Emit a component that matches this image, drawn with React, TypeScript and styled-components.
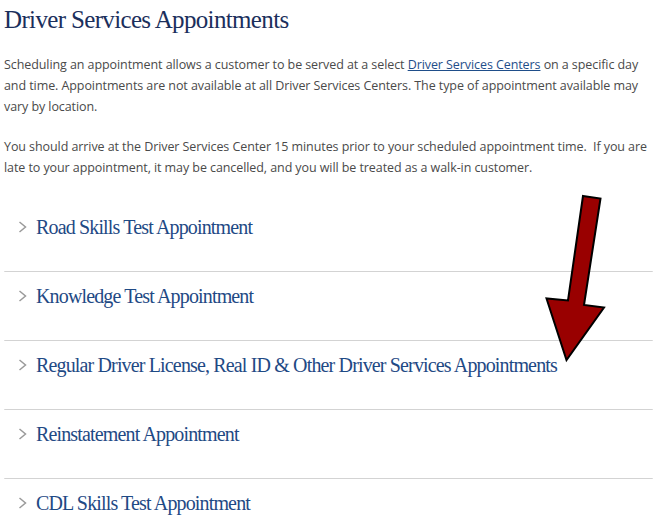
import React from 'react';
import styled, { createGlobalStyle } from 'styled-components';

const GlobalStyle = createGlobalStyle`
  html, body {
    margin: 0;
    padding: 0;
    background: #ffffff;
  }
  body {
    font-family: "Open Sans", "Liberation Sans", sans-serif;
  }
`;

const Page = styled.div`
  position: relative;
  width: 656px;
  height: 522px;
  overflow: hidden;
  box-sizing: border-box;
  padding: 0 3px 0 4px;
`;

const Title = styled.h1`
  margin: 0;
  padding-top: 5px;
  font-family: "Liberation Serif", serif;
  font-weight: normal;
  font-size: 25px;
  line-height: 30px;
  letter-spacing: -0.65px;
  color: #1b2f5c;
`;

const Paragraph = styled.p`
  margin: 19px 0 0;
  font-size: 12.5px;
  line-height: 21px;
  letter-spacing: -0.08px;
  color: #4a4a4a;
`;

const Link = styled.a`
  color: #1f4e8a;
  text-decoration: underline;
`;

const Accordion = styled.div`
  margin-top: 25px;
`;

const Item = styled.div<{ $first?: boolean }>`
  border-top: ${({ $first }) => ($first ? 'none' : '1px solid #d3d3d3')};
  border-radius: 1px;
`;

const Header = styled.div`
  display: flex;
  align-items: center;
  padding: 12px 0 32px;
  height: 24px;
`;

const Chevron = styled.svg`
  width: 9px;
  height: 12px;
  margin: 0 9px 0 14px;
  flex-shrink: 0;
`;

const ItemTitle = styled.span`
  font-family: "Liberation Serif", serif;
  font-size: 20px;
  line-height: 24px;
  letter-spacing: -0.85px;
  color: #1f4a85;
`;

const Arrow = styled.svg`
  position: absolute;
  left: 0;
  top: 0;
  width: 656px;
  height: 522px;
  pointer-events: none;
`;

const items = [
  'Road Skills Test Appointment',
  'Knowledge Test Appointment',
  'Regular Driver License, Real ID & Other Driver Services Appointments',
  'Reinstatement Appointment',
  'CDL Skills Test Appointment',
];

export default function App() {
  return (
    <>
      <GlobalStyle />
      <Page>
        <Title>Driver Services Appointments</Title>
        <Paragraph>
          Scheduling an appointment allows a customer to be served at a select{' '}
          <Link href="#">Driver Services Centers</Link> on a specific day and time.
          Appointments are not available at all Driver Services Centers. The type of
          appointment available may vary by location.
        </Paragraph>
        <Paragraph>
          You should arrive at the Driver Services Center 15 minutes prior to your
          scheduled appointment time.&nbsp; If you are late to your appointment, it may
          be cancelled, and you will be treated as a walk-in customer.
        </Paragraph>
        <Accordion>
          {items.map((label, i) => (
            <Item key={label} $first={i === 0}>
              <Header>
                <Chevron viewBox="0 0 9 12">
                  <path d="M1.5 1 L7.5 6 L1.5 11" fill="none" stroke="#9a9a9a" strokeWidth="1.5" />
                </Chevron>
                <ItemTitle>{label}</ItemTitle>
              </Header>
            </Item>
          ))}
        </Accordion>
        <Arrow viewBox="0 0 656 522">
          <polygon
            points="583,196 600.5,198.5 584,305 604,307.5 566.5,360 546.5,298.5 568,300.5"
            fill="#990000"
            stroke="#000000"
            strokeWidth="2"
            strokeLinejoin="miter"
          />
        </Arrow>
      </Page>
    </>
  );
}
